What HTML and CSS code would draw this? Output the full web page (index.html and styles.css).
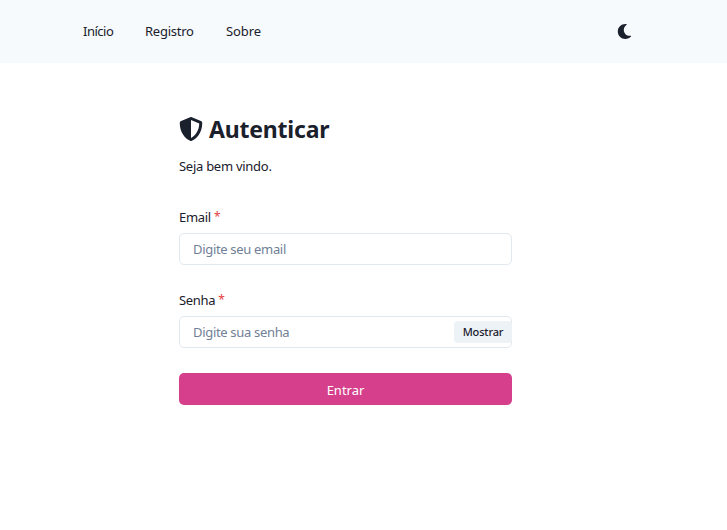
FILE: index.html
```
<!DOCTYPE html>
<html lang="pt-BR">
<head>
<meta charset="utf-8">
<title>Autenticar</title>
<link rel="stylesheet" href="styles.css">
</head>
<body>
<header class="topbar">
  <nav class="nav">
    <a class="home">Início</a>
    <a class="register">Registro</a>
    <a class="about">Sobre</a>
  </nav>
  <svg class="moon" viewBox="0 0 512 512" fill="currentColor"><path d="M283.2 512c79 0 151.100-36 198.900-94.800 7.100-8.700-.6-21.400-11.600-19.400C346.300 421.500 232.200 326.300 232.200 200.900c0-72.200 38.700-138.600 101.500-174.400 9.700-5.500 7.300-20.200-3.800-22.200A258.200 258.200 0 0 0 283.200 0C141.900 0 27.200 114.500 27.200 256c0 141.300 114.500 256 256 256z"/></svg>
</header>
<main class="login">
  <h1 class="title">
    <svg class="shield" viewBox="0 0 512 512" fill="currentColor"><path d="M466.500 83.700l-192-80a48.200 48.200 0 0 0-36.900 0l-192 80C27.700 91.100 16 108.600 16 128c0 198.500 114.500 335.700 221.500 380.300 11.800 4.900 25.100 4.900 36.900 0C360.100 472.600 496 349.300 496 128c0-19.400-11.700-36.900-29.500-44.300zM256 446V66l176 73.300c-3.200 151-81.900 261-176 306.700z"/></svg>
    <span>Autenticar</span>
  </h1>
  <p class="welcome">Seja bem vindo.</p>
  <form class="form">
    <label class="label" for="email"><span class="label-email">Email</span> <span class="required">*</span></label>
    <input class="input email" id="email" type="email" placeholder="Digite seu email">
    <label class="label" for="password"><span class="label-password">Senha</span> <span class="required">*</span></label>
    <div class="password-field">
      <input class="input password" id="password" type="password" placeholder="Digite sua senha">
      <button class="show" type="button">Mostrar</button>
    </div>
    <button class="submit" type="button">Entrar</button>
  </form>
</main>
</body>
</html>
```
FILE: styles.css
```
* { box-sizing: border-box; margin: 0; }
body {
  background: #fff;
  color: #1a202c;
  font: 13px/20px "Noto Sans", sans-serif;
}
.topbar {
  display: flex;
  align-items: center;
  justify-content: space-between;
  height: 63px;
  padding: 0 95px 0 83px;
  background: #f6fafd;
}
.nav { display: flex; gap: 32px; padding-bottom: 2px; }
.home { width: 30px; letter-spacing: -0.5px; }
.register { width: 49px; letter-spacing: -0.25px; }
.about { width: 35px; letter-spacing: -0.1px; }
.nav a { white-space: nowrap; }
.moon { width: 15px; height: 15px; }
.login { width: 333px; margin: 50px 0 0 179px; }
.title {
  display: flex;
  align-items: center;
  gap: 6px;
  height: 32px;
  font-size: 23px;
  line-height: 32px;
  font-weight: 700;
  letter-spacing: -0.2px;
}
.shield { width: 24px; height: 24px; }
.welcome { margin-top: 11px; letter-spacing: -0.27px; }
.form { display: flex; flex-direction: column; margin-top: 31px; }
.label { display: flex; gap: 3px; height: 20px; margin-bottom: 6px; letter-spacing: -0.3px; }
.required { color: #e53e3e; font-size: 12px; }
.input {
  width: 100%;
  height: 32px;
  padding: 0 13px;
  border: 1px solid #e2e8f0;
  border-radius: 5px;
  background: #fff;
  font: inherit;
  letter-spacing: -0.32px;
}
.input::placeholder { color: #718096; opacity: 1; }
.email { margin-bottom: 25px; }
.password-field { position: relative; height: 32px; }
.show {
  position: absolute;
  top: 5px;
  right: 0;
  width: 58px;
  height: 22px;
  padding: 0;
  border: 0;
  border-radius: 4px;
  background: #edf2f7;
  color: #1a202c;
  font: 500 11px/22px "Noto Sans", sans-serif;
  letter-spacing: -0.15px;
}
.submit {
  height: 32px;
  margin-top: 25px;
  padding: 2px 0 0;
  border: 0;
  border-radius: 5px;
  background: #d53f8c;
  color: #fff;
  font: inherit;
}
```
